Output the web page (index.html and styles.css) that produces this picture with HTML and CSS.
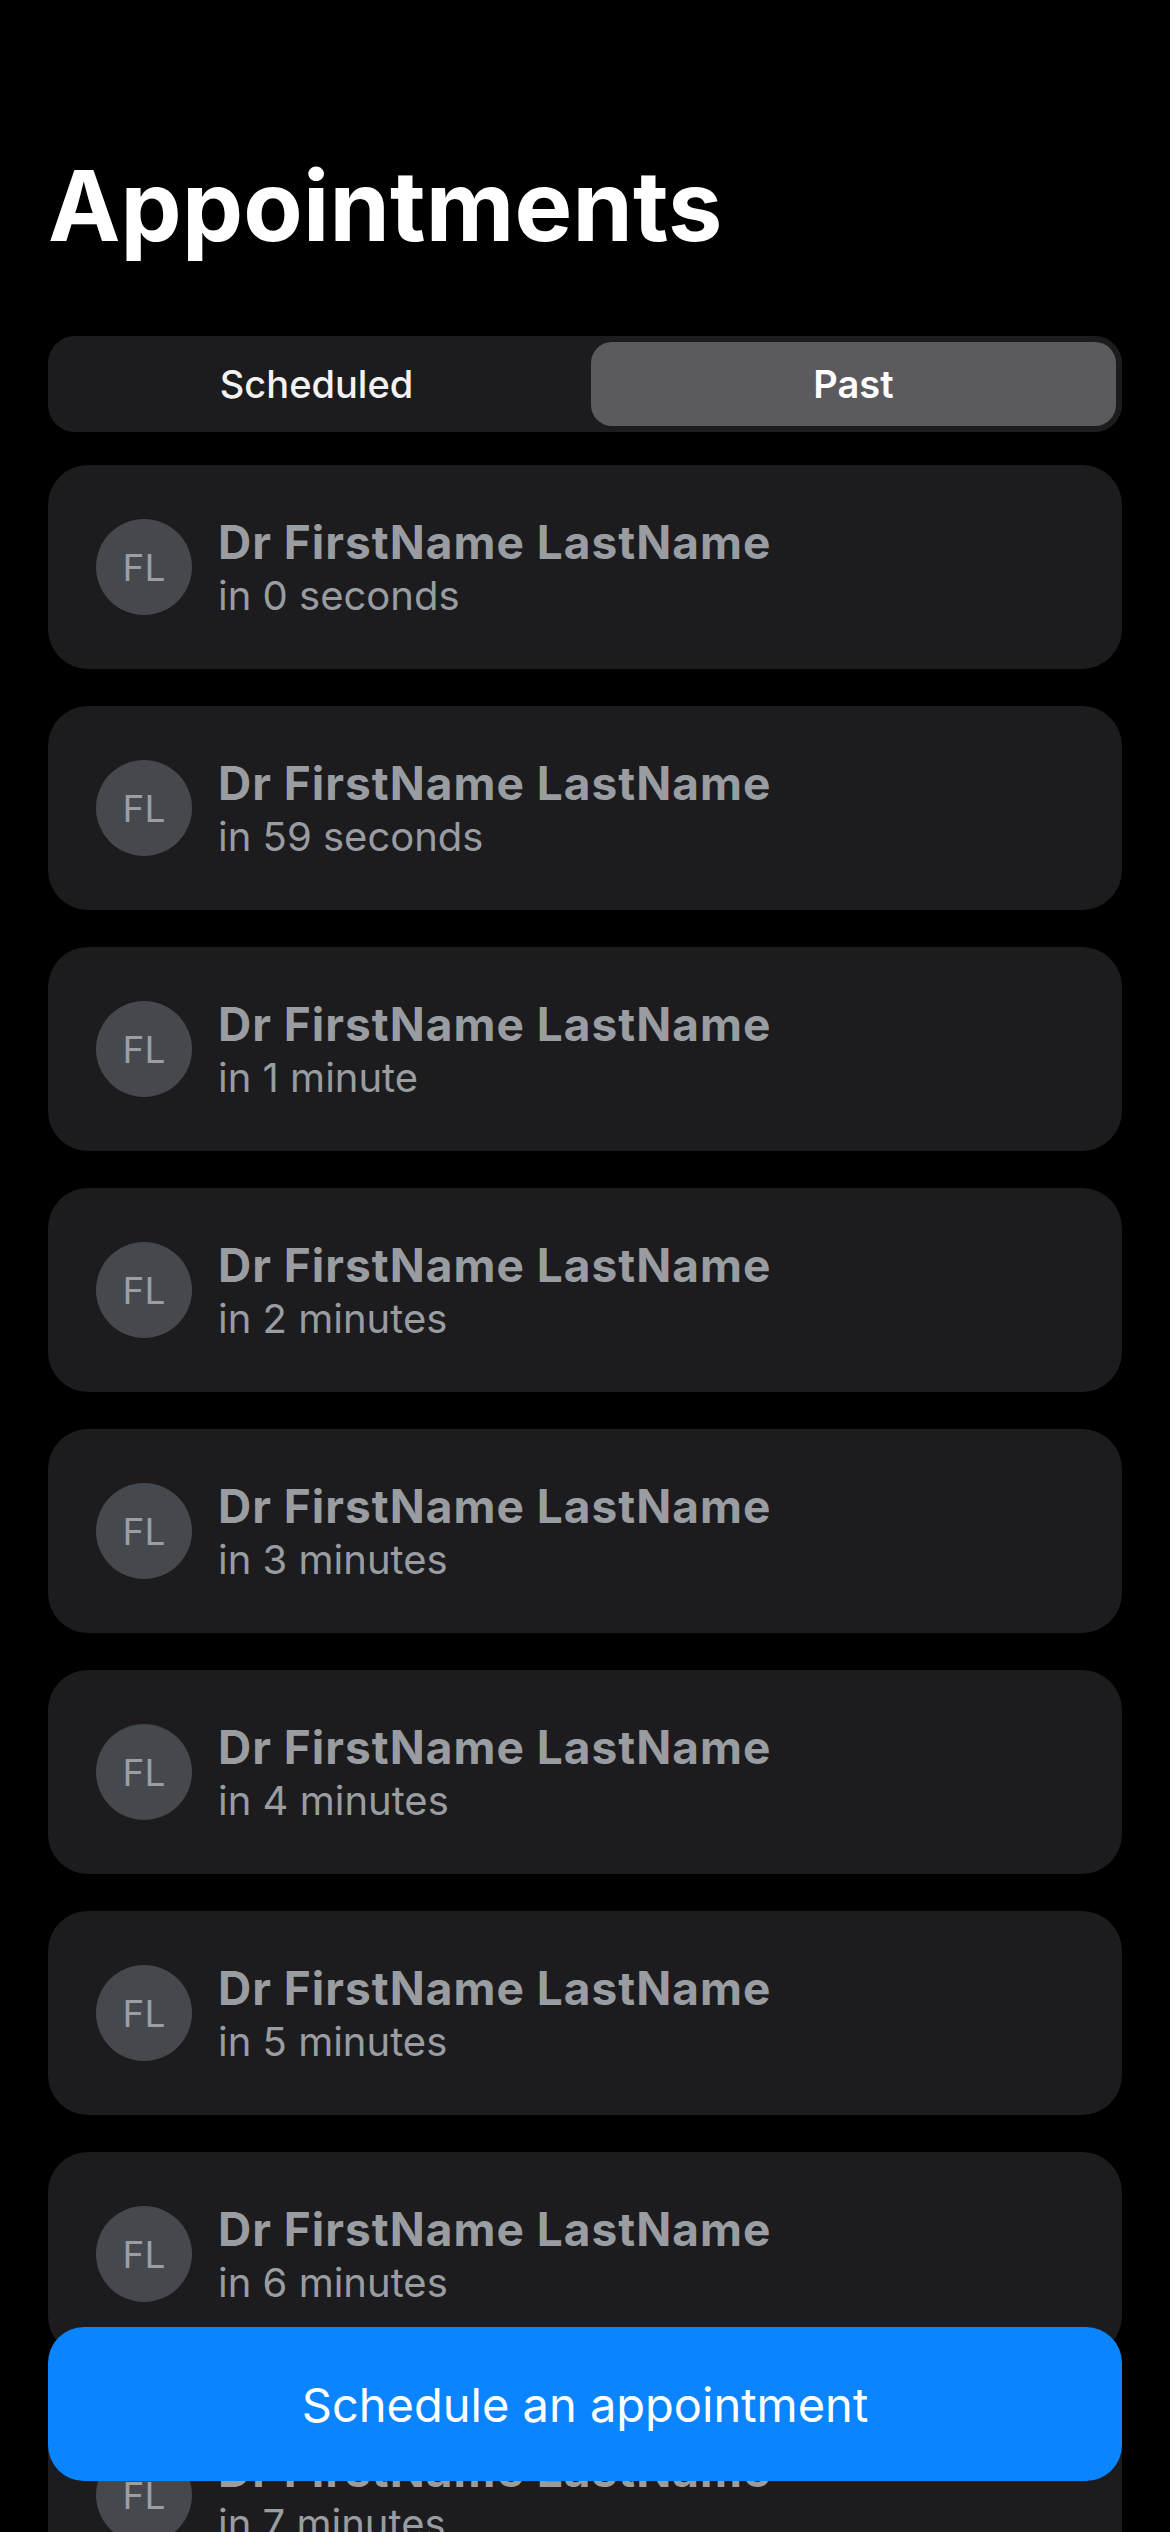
FILE: index.html
```html
<!DOCTYPE html>
<html lang="en">
<head>
<meta charset="utf-8">
<title>Appointments</title>
<link rel="stylesheet" href="styles.css">
</head>
<body>
<main class="page">
  <h1 class="title">Appointments</h1>
  <div class="segmented">
    <div class="segment">Scheduled</div>
    <div class="segment segment--active">Past</div>
  </div>
  <ul class="list">
    <li class="card"><div class="avatar">FL</div><div class="info"><div class="name">Dr FirstName LastName</div><div class="time">in 0 seconds</div></div></li>
    <li class="card"><div class="avatar">FL</div><div class="info"><div class="name">Dr FirstName LastName</div><div class="time">in 59 seconds</div></div></li>
    <li class="card"><div class="avatar">FL</div><div class="info"><div class="name">Dr FirstName LastName</div><div class="time">in 1 minute</div></div></li>
    <li class="card"><div class="avatar">FL</div><div class="info"><div class="name">Dr FirstName LastName</div><div class="time">in 2 minutes</div></div></li>
    <li class="card"><div class="avatar">FL</div><div class="info"><div class="name">Dr FirstName LastName</div><div class="time">in 3 minutes</div></div></li>
    <li class="card"><div class="avatar">FL</div><div class="info"><div class="name">Dr FirstName LastName</div><div class="time">in 4 minutes</div></div></li>
    <li class="card"><div class="avatar">FL</div><div class="info"><div class="name">Dr FirstName LastName</div><div class="time">in 5 minutes</div></div></li>
    <li class="card"><div class="avatar">FL</div><div class="info"><div class="name">Dr FirstName LastName</div><div class="time">in 6 minutes</div></div></li>
    <li class="card"><div class="avatar">FL</div><div class="info"><div class="name">Dr FirstName LastName</div><div class="time">in 7 minutes</div></div></li>
  </ul>
  <button class="cta" type="button">Schedule an appointment</button>
</main>
</body>
</html>
```

FILE: styles.css
```css
* { box-sizing: border-box; }
html, body {
  margin: 0;
  padding: 0;
  background: #000;
}
body {
  font-family: Inter, "Noto Sans", "Liberation Sans", sans-serif;
  color: #fff;
  height: 2532px;
  overflow: hidden;
}
.page {
  padding: 0 48px;
}
.title {
  margin: 0;
  padding-top: 147px;
  font-size: 97px;
  font-weight: 700;
  line-height: 117px;
  letter-spacing: 0.2px;
  color: #fff;
}
.segmented {
  margin-top: 72px;
  height: 96px;
  display: grid;
  grid-template-columns: 1fr 1fr;
  column-gap: 12px;
  padding: 6px;
  background: #1c1c1e;
  border-radius: 27px;
}
.segment {
  display: flex;
  align-items: center;
  justify-content: center;
  font-size: 38px;
  font-weight: 500;
  color: #f2f2f2;
  border-radius: 21px;
}
.segment--active {
  background: #5b5b5f;
  font-weight: 600;
  color: #fff;
}
.list {
  list-style: none;
  margin: 33px 0 0;
  padding: 0;
  display: flex;
  flex-direction: column;
  gap: 37px;
}
.card {
  height: 204px;
  flex: 0 0 204px;
  background: #1c1c1e;
  border-radius: 40px;
  display: flex;
  align-items: center;
  padding: 0 48px;
  gap: 26px;
}
.avatar {
  width: 96px;
  height: 96px;
  flex: 0 0 96px;
  border-radius: 50%;
  background: #45494e;
  color: #9b9fa4;
  display: flex;
  align-items: center;
  justify-content: center;
  font-size: 37px;
  font-weight: 400;
}
.info {
  display: flex;
  flex-direction: column;
  padding-top: 6px;
}
.name {
  font-size: 46px;
  font-weight: 700;
  line-height: 52px;
  color: #999da2;
  letter-spacing: 1px;
}
.time {
  font-size: 40px;
  font-weight: 400;
  line-height: 56px;
  color: #999da2;
}
.cta {
  position: fixed;
  left: 48px;
  right: 48px;
  bottom: 51px;
  height: 154px;
  border: none;
  border-radius: 36px;
  background: #0a84ff;
  color: #fff;
  font-family: inherit;
  font-size: 47px;
  font-weight: 400;
}
```
